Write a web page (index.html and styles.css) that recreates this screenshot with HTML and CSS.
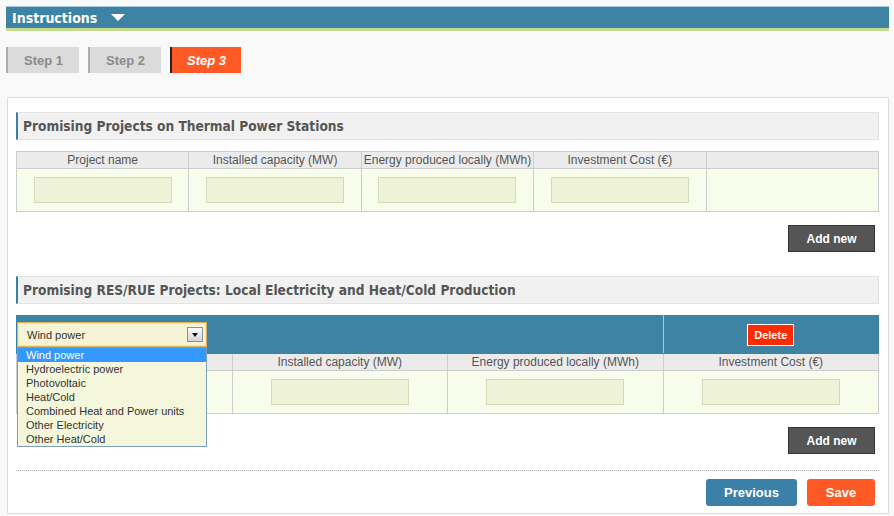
FILE: index.html
```html
<!DOCTYPE html>
<html lang="en">
<head>
<meta charset="utf-8">
<title>Step 3</title>
<link rel="stylesheet" href="styles.css">
</head>
<body>
<div class="page">
  <div class="topbar">
    <span class="topbar-title">Instructions</span>
    <span class="topbar-caret"></span>
  </div>

  <div class="steps">
    <div class="step">Step 1</div>
    <div class="step">Step 2</div>
    <div class="step step-active">Step 3</div>
  </div>

  <div class="panel">
    <div class="section-title">Promising Projects on Thermal Power Stations</div>
    <table class="grid grid-5">
      <thead>
        <tr>
          <th>Project name</th>
          <th>Installed capacity (MW)</th>
          <th>Energy produced locally (MWh)</th>
          <th>Investment Cost (€)</th>
          <th></th>
        </tr>
      </thead>
      <tbody>
        <tr>
          <td><input class="field" type="text"></td>
          <td><input class="field" type="text"></td>
          <td><input class="field" type="text"></td>
          <td><input class="field" type="text"></td>
          <td></td>
        </tr>
      </tbody>
    </table>
    <div class="add-row"><button class="btn-add">Add new</button></div>

    <div class="section-title section-title-2">Promising RES/RUE Projects: Local Electricity and Heat/Cold Production</div>
    <table class="grid grid-4">
      <thead>
        <tr class="blue-row">
          <th colspan="3" class="select-cell">
            <div class="select-wrap">
              <div class="select-box">
                <span class="select-text">Wind power</span>
                <span class="select-arrow"></span>
              </div>
              <ul class="dropdown">
                <li class="opt opt-selected">Wind power</li>
                <li class="opt">Hydroelectric power</li>
                <li class="opt">Photovoltaic</li>
                <li class="opt">Heat/Cold</li>
                <li class="opt">Combined Heat and Power units</li>
                <li class="opt">Other Electricity</li>
                <li class="opt">Other Heat/Cold</li>
              </ul>
            </div>
          </th>
          <th class="delete-cell"><button class="btn-delete">Delete</button></th>
        </tr>
        <tr>
          <th></th>
          <th>Installed capacity (MW)</th>
          <th>Energy produced locally (MWh)</th>
          <th>Investment Cost (€)</th>
        </tr>
      </thead>
      <tbody>
        <tr>
          <td></td>
          <td><input class="field" type="text"></td>
          <td><input class="field" type="text"></td>
          <td><input class="field" type="text"></td>
        </tr>
      </tbody>
    </table>
    <div class="add-row"><button class="btn-add">Add new</button></div>

    <div class="divider"></div>
    <div class="nav-row">
      <button class="btn-nav btn-prev">Previous</button>
      <button class="btn-nav btn-save">Save</button>
    </div>
  </div>
</div>
</body>
</html>
```

FILE: styles.css
```css
* { box-sizing: border-box; }

body {
  margin: 0;
  background: #f9f9f9;
  font-family: "Liberation Sans", Arial, sans-serif;
  color: #333;
}

.page {
  padding: 6px 5px 2px 6px;
}

.topbar {
  height: 25px;
  background: #3e82a4;
  border-top: 1px solid #a9cce0;
  border-bottom: 3px solid #c3db8e;
  display: flex;
  align-items: center;
  padding-left: 6px;
  gap: 14px;
}

.topbar-title {
  color: #fff;
  font-family: "DejaVu Sans Condensed", "DejaVu Sans", sans-serif;
  font-weight: bold;
  font-size: 14px;
  line-height: 16px;
  margin-top: 1px;
}

.topbar-caret {
  width: 0;
  height: 0;
  border-left: 7px solid transparent;
  border-right: 7px solid transparent;
  border-top: 7px solid #fff;
}

.steps {
  display: flex;
  gap: 9px;
  margin-top: 16px;
}

.step {
  width: 73px;
  height: 26px;
  background: #dbdbdb;
  border-left: 2px solid #adadad;
  color: #8a8a8a;
  font-weight: bold;
  font-size: 13px;
  display: flex;
  align-items: center;
  justify-content: center;
}

.step-active {
  width: 71px;
  background: #ff5a26;
  border-left-color: #222;
  color: #fff;
  font-style: italic;
}

.panel {
  margin-top: 24px;
  margin-left: 1px;
  background: #fff;
  border: 1px solid #dcdcdc;
  padding: 14px 9px 7px 8px;
}

.section-title {
  height: 28px;
  background: #f1f1f1;
  border: 1px solid #e3e3e3;
  border-left: 2px solid #3d7fa0;
  padding-left: 5px;
  line-height: 26px;
  color: #555;
  font-family: "DejaVu Sans Condensed", "DejaVu Sans", sans-serif;
  font-weight: bold;
  font-size: 13.6px;
}

.section-title-2 {
  margin-top: 24px;
}

.grid {
  width: 100%;
  border-collapse: collapse;
  table-layout: fixed;
  margin-top: 11px;
  border: 1px solid #cccccc;
}

.grid th {
  height: 17px;
  padding: 0;
  background: #ebebeb;
  border: 1px solid #cccccc;
  color: #555;
  font-weight: normal;
  font-size: 12px;
  text-align: center;
}

.grid td {
  height: 43px;
  padding: 0;
  background: #f7fdea;
  border: 1px solid #cccccc;
  text-align: center;
  vertical-align: middle;
}

.field {
  display: block;
  margin: 0 auto;
  width: 138px;
  height: 26px;
  background: #eef3d7;
  border: 1px solid #d3dab9;
  padding: 0 4px;
  font-family: "Liberation Sans", Arial, sans-serif;
  font-size: 11px;
}

.grid .blue-row th {
  height: 38px;
  background: #3e82a4;
  border: 1px solid #3e82a4;
  border-right-color: #a9c9d9;
}

.grid .blue-row th.delete-cell {
  border-right-color: #3e82a4;
  border-left-color: #a9c9d9;
}

.select-cell {
  text-align: left;
  vertical-align: top;
}

.grid .blue-row .select-cell {
  padding: 6px 0 0 0;
  text-align: left;
  vertical-align: top;
}

.select-wrap {
  position: relative;
  width: 190px;
  text-align: left;
}

.select-box {
  height: 25px;
  background: #f6f4d4;
  border: 1px solid #dab35a;
  box-shadow: inset 0 0 0 1px #f0e7b8;
  display: flex;
  align-items: center;
  justify-content: space-between;
  padding: 0 3px 0 9px;
}

.select-text {
  color: #333;
  font-size: 11px;
}

.select-arrow {
  width: 16px;
  height: 15px;
  border: 1px solid #8e8e8e;
  background: linear-gradient(#fafafa, #d6d6d6);
  position: relative;
}

.select-arrow::after {
  content: "";
  position: absolute;
  left: 4px;
  top: 5px;
  border-left: 3.5px solid transparent;
  border-right: 3.5px solid transparent;
  border-top: 4px solid #111;
}

.dropdown {
  position: absolute;
  top: 100%;
  left: 0;
  width: 190px;
  margin: 0;
  padding: 0;
  list-style: none;
  background: #f5f7dd;
  border: 1px solid #7f9db9;
  text-align: left;
  z-index: 5;
}

.opt {
  height: 14px;
  line-height: 14px;
  padding-left: 8px;
  color: #333;
  font-size: 11px;
  font-weight: normal;
  white-space: nowrap;
  text-align: left;
}

.opt-selected {
  background: #3399ff;
  color: #fff;
}

.delete-cell {
  text-align: center;
}

.btn-delete {
  width: 47px;
  height: 22px;
  background: #ff2b00;
  border: 1px solid #fff;
  color: #fff;
  font-family: "Liberation Sans", Arial, sans-serif;
  font-weight: bold;
  font-size: 11px;
  padding: 0;
}

.add-row {
  display: flex;
  justify-content: flex-end;
  margin-top: 13px;
  padding-right: 4px;
}

.btn-add {
  width: 87px;
  height: 27px;
  background: #555555;
  border: 1px solid #333;
  color: #fff;
  font-family: "Liberation Sans", Arial, sans-serif;
  font-weight: bold;
  font-size: 12px;
  padding: 0;
}

.divider {
  margin-top: 16px;
  border-top: 1px dotted #a8a8a8;
}

.nav-row {
  display: flex;
  justify-content: flex-end;
  gap: 10px;
  margin-top: 8px;
  padding-right: 4px;
}

.btn-nav {
  height: 27px;
  border: none;
  border-radius: 3px;
  color: #fff;
  font-family: "Liberation Sans", Arial, sans-serif;
  font-weight: bold;
  font-size: 13px;
  padding: 0;
}

.btn-prev {
  width: 91px;
  background: #3b80a6;
}

.btn-save {
  width: 68px;
  background: #ff5a26;
}
```
